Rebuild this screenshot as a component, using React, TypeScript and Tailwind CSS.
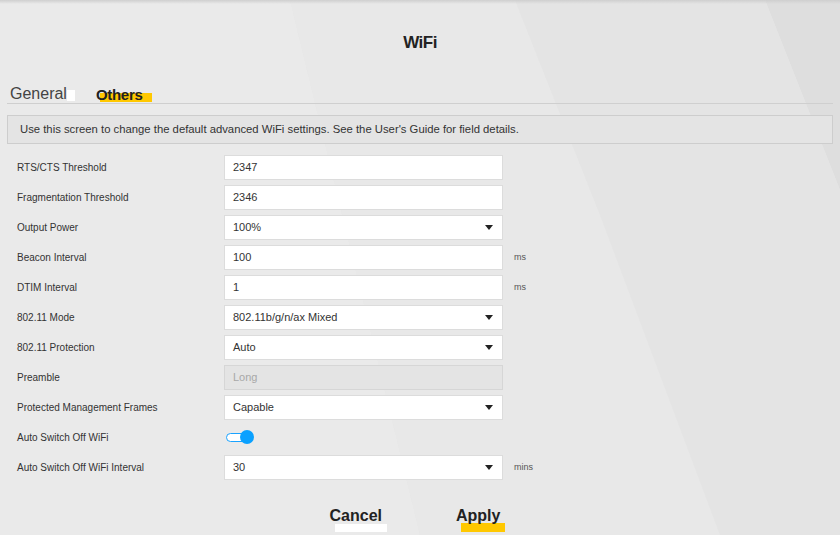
type Field =
  | { label: string; kind: 'text'; value: string; unit?: string }
  | { label: string; kind: 'select'; value: string; unit?: string }
  | { label: string; kind: 'disabled'; value: string }
  | { label: string; kind: 'toggle' };

const fields: Field[] = [
  { label: 'RTS/CTS Threshold', kind: 'text', value: '2347' },
  { label: 'Fragmentation Threshold', kind: 'text', value: '2346' },
  { label: 'Output Power', kind: 'select', value: '100%' },
  { label: 'Beacon Interval', kind: 'text', value: '100', unit: 'ms' },
  { label: 'DTIM Interval', kind: 'text', value: '1', unit: 'ms' },
  { label: '802.11 Mode', kind: 'select', value: '802.11b/g/n/ax Mixed' },
  { label: '802.11 Protection', kind: 'select', value: 'Auto' },
  { label: 'Preamble', kind: 'disabled', value: 'Long' },
  { label: 'Protected Management Frames', kind: 'select', value: 'Capable' },
  { label: 'Auto Switch Off WiFi', kind: 'toggle' },
  { label: 'Auto Switch Off WiFi Interval', kind: 'select', value: '30', unit: 'mins' },
];

function Backdrop() {
  return (
    <svg className="absolute inset-0 h-full w-full" viewBox="0 0 840 535" preserveAspectRatio="none">
      <rect width="840" height="535" fill="#e6e6e6" />
      <polygon points="0,0 290,0 420,535 0,535" fill="#eaeaea" />
      <polygon points="290,0 515,0 600,215 720,535 420,535" fill="#e8e8e8" />
      <polygon points="765,0 840,0 840,190" fill="#dedede" />
      <polygon points="515,0 765,0 840,190 840,535 720,535 600,215" fill="#e4e4e4" />
    </svg>
  );
}

function Row({ field }: { field: Field }) {
  return (
    <div className="flex h-[30px] items-center">
      <div className="w-[224px] shrink-0 pl-[17px] text-[10px] text-[#333]">{field.label}</div>
      {field.kind === 'toggle' ? (
        <div className="relative ml-[2px] h-[14px] w-[28px]">
          <div className="absolute left-0 top-[3px] h-[9px] w-[22px] rounded-full border border-[#1aa3ff] bg-white" />
          <div className="absolute right-0 top-0 h-[14px] w-[14px] rounded-full bg-[#0aa1ff]" />
        </div>
      ) : (
        <div
          className={`flex h-[25px] w-[279px] items-center justify-between border px-[8px] text-[11px] ${
            field.kind === 'disabled'
              ? 'border-[#d6d6d6] bg-[#e4e4e4] text-[#a8a8a8]'
              : 'border-[#dcdcdc] bg-white text-[#333]'
          }`}
        >
          <span>{field.value}</span>
          {field.kind === 'select' && (
            <svg width="8" height="5" viewBox="0 0 8 5" className="mr-[1px]">
              <polygon points="0,0 8,0 4,5" fill="#222" />
            </svg>
          )}
        </div>
      )}
      {'unit' in field && field.unit && (
        <span className="ml-[11px] mt-[2px] text-[9px] text-[#555]">{field.unit}</span>
      )}
    </div>
  );
}

export default function App() {
  return (
    <div
      className="relative h-[535px] w-[840px] overflow-hidden"
      style={{ fontFamily: '"Liberation Sans", Arial, sans-serif' }}
    >
      <Backdrop />
      <div className="absolute inset-x-0 top-0 h-[4px] bg-gradient-to-b from-[#cfcfcf] to-transparent" />

      <div className="relative flex flex-col">
        <div className="flex h-[84px] items-center justify-center pt-[1px]">
          <h1 className="text-[17px] font-bold tracking-[-0.5px] text-[#222]">WiFi</h1>
        </div>

        {/* Tabs */}
        <div className="mx-[7px] flex h-[20px] items-end border-b border-[#cfcfcf] pb-[1px]">
          <div className="ml-[3px] flex items-end">
            <span className="text-[16px] leading-none text-[#444]">General</span>
            <span className="mb-[1px] h-[11px] w-[8px] bg-white" />
          </div>
          <div className="relative ml-[21px] flex items-end">
            <span className="absolute bottom-[0px] left-[4px] h-[9px] w-[52px] bg-[#ffc800]" />
            <span className="relative text-[15px] font-bold leading-none tracking-[-0.3px] text-[#222]">Others</span>
          </div>
        </div>

        {/* Info */}
        <div className="mx-[7px] mt-[11px] flex h-[29px] items-center border border-[#cdcdcd] bg-[#e4e4e4] pl-[12px] text-[11.3px] text-[#333]">
          Use this screen to change the default advanced WiFi settings. See the User's Guide for field details.
        </div>

        {/* Fields */}
        <div className="mt-[8px] flex flex-col">
          {fields.map((f) => (
            <Row key={f.label} field={f} />
          ))}
        </div>

        {/* Buttons */}
        <div className="mt-[22px] flex justify-center gap-[74px] pr-[10px]">
          <button className="relative">
            <span className="absolute bottom-[-4px] left-[5px] h-[8px] w-[52px] bg-white" />
            <span className="relative text-[16px] font-bold text-[#222]">Cancel</span>
          </button>
          <button className="relative">
            <span className="absolute bottom-[-4px] left-[5px] h-[9px] w-[44px] bg-[#ffc800]" />
            <span className="relative text-[16px] font-bold text-[#222]">Apply</span>
          </button>
        </div>
      </div>
    </div>
  );
}
